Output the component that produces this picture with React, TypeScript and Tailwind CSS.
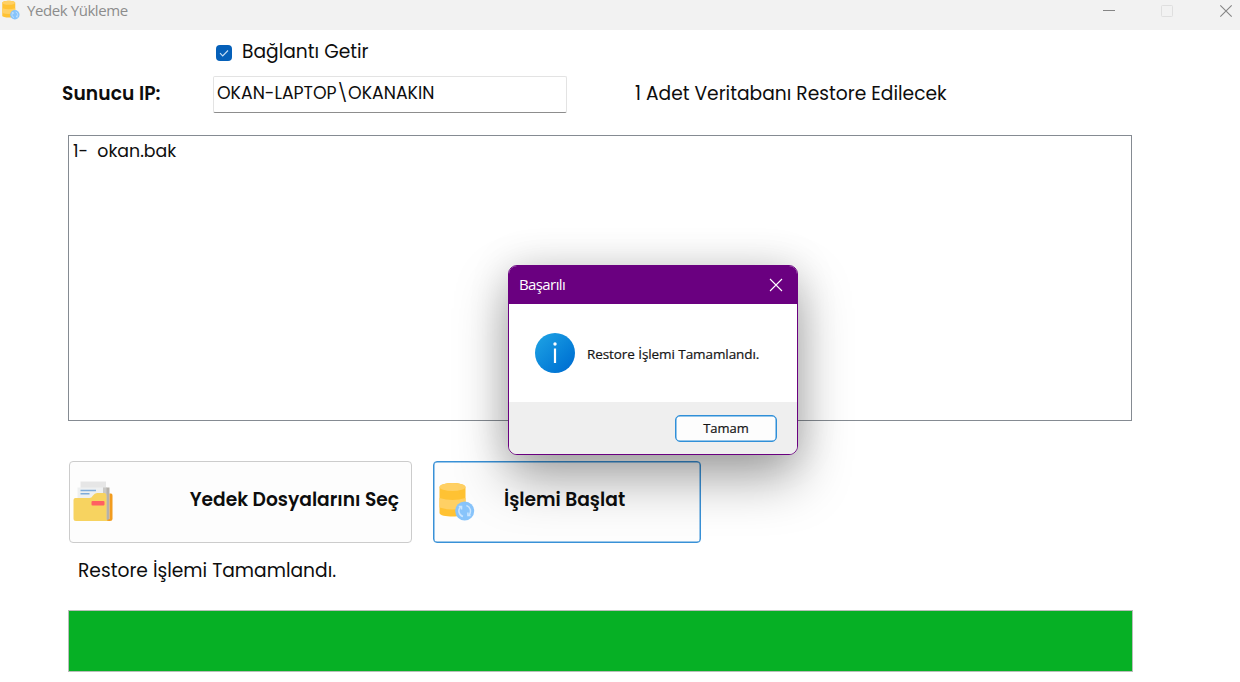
function DatabaseIcon({ className }: { className: string }) {
  return (
    <svg className={className} viewBox="0 0 36 39">
      <path d="M0.500 5.500C0.500 2.500 6.500 1 13.500 1S26.500 2.500 26.500 5.500V31C26.500 33.500 20 34.500 13.500 34.500S0.500 33.500 0.500 31Z" fill="#ffc233" />
      <ellipse cx="13.500" cy="5" rx="13" ry="4" fill="#ffd064" />
      <path d="M0.500 16Q13.500 20 26.500 16V25.500Q13.500 29.500 0.500 25.500Z" fill="#ffd064" />
      <circle cx="25.700" cy="29" r="9.500" fill="#88c4fb" />
      <g fill="none" stroke="#c9e5ff" strokeWidth="1.500">
        <path d="M24 34.500A5.800 5.800 0 0 1 21.500 25M27.400 23.500A5.800 5.800 0 0 1 29.900 33" />
        <path d="M19.800 24.600H22.500V27.400M31.600 33.400H28.900V30.600" />
      </g>
    </svg>
  );
}

function FolderIcon() {
  return (
    <svg className="h-[42px] w-10" viewBox="0 0 40 42">
      <path d="M7.500 0.500H33V20H7.500Z" fill="#e6e6e6" />
      <path d="M33 6.500H36.500V40H33Z" fill="#b5b1ab" />
      <path d="M30 6.500H33.500V40H30Z" fill="#c9c8c6" />
      <path d="M36.500 12.500H38Q39.500 12.500 39.500 14.500V38Q39.500 40 37 40H32L36.500 38Z" fill="#f29c1f" />
      <path d="M4.500 6.500H30V24H4.500Z" fill="#eef0f1" />
      <path d="M7.500 9.500H23M7.500 12.700H16.500" stroke="#7fabda" strokeWidth="1.400" />
      <path d="M2.500 17H16.500Q18.500 17 20 14.500Q21.500 12 24 12H31.500Q33.500 12 33.500 14.500V37.500Q33.500 40 36 40H3Q0.500 40 0.500 37.500V19Q0.500 17 2.500 17Z" fill="#f7d360" />
      <rect x="18.500" y="20" width="13" height="4.600" rx="1" fill="#ff5f62" />
    </svg>
  );
}

function TitleBar() {
  return (
    <header className="flex h-[30px] items-start bg-[#f2f2f2] pl-0.5 text-[#8c8c8c]">
      <DatabaseIcon className="h-5 w-[18px]" />
      <span className="ml-[7px] font-['Open_Sans','Noto_Sans',sans-serif] text-[15px] leading-[21px] tracking-[-0.028em]">Yedek Yükleme</span>
      <svg className="ml-auto h-[22px] w-[140px]" viewBox="0 0 140 22" fill="none">
        <path d="M3 10.500H15" stroke="#858585" />
        <rect x="61.500" y="5.500" width="11" height="11" rx="1" stroke="#dfdfdf" />
        <path d="M120.300 5.300L131.700 16.700M131.700 5.300L120.300 16.700" stroke="#858585" strokeWidth="1.100" />
      </svg>
    </header>
  );
}

function Dialog() {
  return (
    <section role="dialog" className="absolute left-[508px] top-[265px] flex h-[190px] w-[290px] flex-col overflow-hidden rounded-[9px] border border-[#6a0080] bg-white font-['Open_Sans','Noto_Sans',sans-serif] shadow-[0_24px_52px_rgba(0,0,0,0.34),0_0px_40px_rgba(0,0,0,0.13)]">
      <div className="flex h-[38px] shrink-0 items-center justify-between bg-[#6a0080] pl-2.5 pr-[14px] text-white">
        <span className="pb-0.5 text-[15px] tracking-[-0.040em]">Başarılı</span>
        <svg className="size-[14px]" viewBox="0 0 14 14" fill="none" stroke="currentColor" strokeWidth="1.100">
          <path d="M1 1L13 13M13 1L1 13" />
        </svg>
      </div>
      <div className="flex h-[98px] items-center pl-[26px]">
        <div className="mb-px flex size-10 items-center justify-center rounded-full bg-linear-to-br from-[#20a5e5] to-[#0068cf]">
          <svg className="h-[22px] w-1" viewBox="0 0 4 22">
            <circle cx="2" cy="2" r="1.700" fill="white" />
            <path d="M2 6.500V21" stroke="white" strokeWidth="2.200" />
          </svg>
        </div>
        <p className="ml-[12px] pt-[2px] text-[13.500px] font-medium tracking-[-0.006em] whitespace-nowrap text-[#151515] [-webkit-text-stroke:0.200px_#151515]">Restore İşlemi Tamamlandı.</p>
      </div>
      <div className="flex flex-1 items-center justify-end bg-[#efefef] pr-5">
        <button className="flex h-[27px] w-[102px] items-center justify-center rounded-[5px] border-[1.500px] border-[#2f8fd8] bg-[#fdfdfd] pt-0.5 text-[13px] font-medium text-[#151515] shadow-[inset_0_0_0_0.500px_#2f8fd8] [-webkit-text-stroke:0.200px_#151515]">Tamam</button>
      </div>
    </section>
  );
}

export default function App() {
  return (
    <main className="relative h-[682px] w-[1240px] overflow-hidden bg-white font-[Poppins,Inter,sans-serif] text-[18.670px] text-[#0d0d0d]">
      <TitleBar />
      <label className="flex h-[46px] items-start pl-[216px]">
        <span className="mt-[15px] flex size-4 items-center justify-center rounded-[4px] bg-[#0560b9]">
          <svg className="size-3" viewBox="0 0 12 12" fill="none" stroke="#c5def5" strokeWidth="1.100">
            <path d="M2 6.200L4.700 8.900L10 3.500" />
          </svg>
        </span>
        <span className="ml-[10px] pt-[9px] leading-[26px]">Bağlantı Getir</span>
      </label>
      <div className="flex h-[59px] items-start">
        <span className="w-[213px] pl-[62px] font-semibold leading-[35px] tracking-[0.004em]">Sunucu IP:</span>
        <div className="h-[37px] w-[354px] rounded-[2px] border border-[#e3e3e3] border-b-[#8d8d8d] pl-[3px] text-[17.330px] leading-[33px]">OKAN-LAPTOP\OKANAKIN</div>
        <span className="ml-[68px] leading-[35px]">1 Adet Veritabanı Restore Edilecek</span>
      </div>
      <div className="ml-[68px] h-[286px] w-[1064px] border border-[#858b92] pl-1 text-[17.330px] leading-[31px] whitespace-pre">1-  okan.bak</div>
      <div className="ml-[69px] mt-10 flex gap-[21px] font-semibold">
        <button className="flex h-[82px] w-[343px] items-center justify-between rounded-[4px] border border-[#cccccc] bg-[#fdfdfd] pl-[3px] pr-3">
          <FolderIcon />
          <span className="pb-1">Yedek Dosyalarını Seç</span>
        </button>
        <button className="flex h-[82px] w-[268px] items-center rounded-[4px] border-[1.500px] border-[#3991d7] bg-[#fdfdfd] pl-[5px] shadow-[inset_0_0_0_0.500px_#3991d7]">
          <DatabaseIcon className="mb-[2px] h-[39px] w-9" />
          <span className="ml-[29px] pb-1">İşlemi Başlat</span>
        </button>
      </div>
      <p className="ml-[78px] mt-[14px] h-[53px] leading-7">Restore İşlemi Tamamlandı.</p>
      <div className="ml-[68px] h-[62px] w-[1065px] border border-[#b9beb9] bg-[#06b025]" />
      <Dialog />
    </main>
  );
}
